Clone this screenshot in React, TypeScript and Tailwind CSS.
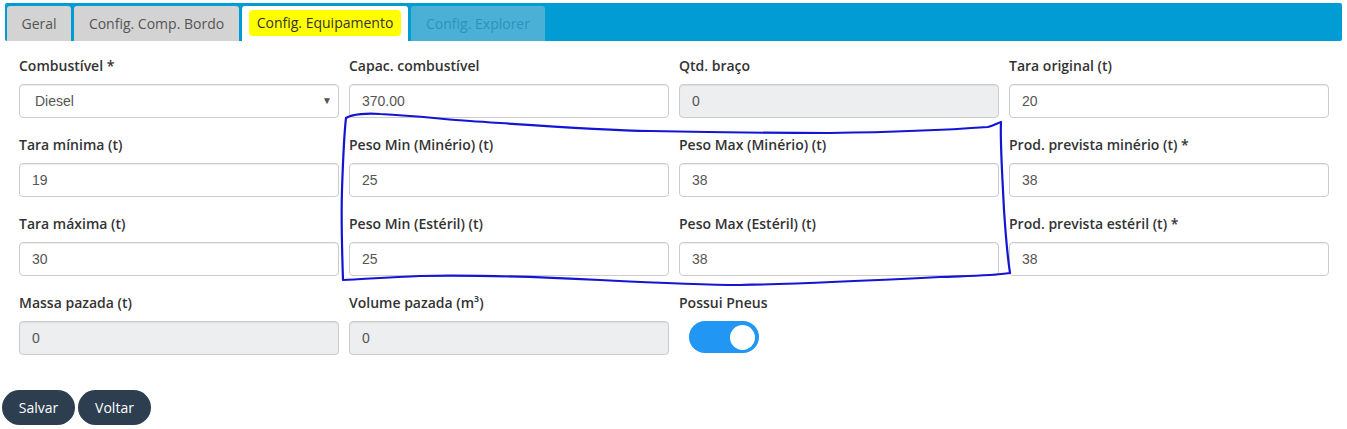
import React from "react";

const sans = { fontFamily: '"Open Sans", "Noto Sans", sans-serif' };
const arial = { fontFamily: '"Liberation Sans", Arial, sans-serif' };

type FieldProps = { label: string; value?: string; disabled?: boolean; select?: boolean };

function Field({ label, value, disabled, select }: FieldProps) {
  return (
    <div className="flex flex-col w-[320px]">
      <div className="h-[20px] leading-[20px] text-[14px] font-semibold text-[#333] mb-[8px] whitespace-nowrap" style={sans}>
        {label}
      </div>
      <div
        className={`relative h-[34px] rounded-[4px] border border-[#cccccc] shadow-[inset_0_1px_1px_rgba(0,0,0,0.075)] flex items-center text-[14px] text-[#555] ${
          disabled ? "bg-[#eceeef]" : "bg-white"
        } ${select ? "pl-[15px]" : "pl-[12px]"}`}
        style={arial}
      >
        {value}
        {select && (
          <span className="absolute right-[6px] top-[10px] text-[10px] leading-[12px] text-[#555]">▼</span>
        )}
      </div>
    </div>
  );
}

export default function App() {
  return (
    <div className="relative w-[1347px] h-[429px] bg-white overflow-hidden" style={sans}>
      <div className="pt-[3px] pl-[5px] pr-[5px]">
        <div className="h-[38px] bg-[#009cd3] rounded-[2px] flex items-end gap-[3px] pl-[2px]">
          <div className="w-[64px] h-[35px] bg-[#d3d3d3] rounded-t-[3px] flex items-center justify-center text-[14px] text-[#555]">
            Geral
          </div>
          <div className="w-[165px] h-[35px] bg-[#d3d3d3] rounded-t-[3px] flex items-center justify-center text-[14px] text-[#555]">
            Config. Comp. Bordo
          </div>
          <div className="w-[166px] h-[35px] bg-white rounded-t-[3px] flex items-center justify-center text-[14px] text-[#333]">
            <span className="bg-[#ffff00] px-[8px] py-[5px] rounded-[4px] leading-[16px] -mt-[2px]">Config. Equipamento</span>
          </div>
          <div className="w-[134px] h-[35px] bg-[#4ab0d6] rounded-t-[3px] flex items-center justify-center text-[14px] text-[#2e93bb]">
            Config. Explorer
          </div>
        </div>
      </div>

      <div className="pl-[19px] pt-[15px] grid grid-cols-[320px_320px_320px_320px] gap-x-[10px] gap-y-[17px]">
        <Field label="Combustível *" value="Diesel" select />
        <Field label="Capac. combustível" value="370.00" />
        <Field label="Qtd. braço" value="0" disabled />
        <Field label="Tara original (t)" value="20" />

        <Field label="Tara mínima (t)" value="19" />
        <Field label="Peso Min (Minério) (t)" value="25" />
        <Field label="Peso Max (Minério) (t)" value="38" />
        <Field label="Prod. prevista minério (t) *" value="38" />

        <Field label="Tara máxima (t)" value="30" />
        <Field label="Peso Min (Estéril) (t)" value="25" />
        <Field label="Peso Max (Estéril) (t)" value="38" />
        <Field label="Prod. prevista estéril (t) *" value="38" />

        <Field label="Massa pazada (t)" value="0" disabled />
        <Field label="Volume pazada (m³)" value="0" disabled />
        <div className="flex flex-col w-[320px]">
          <div className="h-[20px] leading-[20px] text-[14px] font-semibold text-[#333] mb-[8px]">Possui Pneus</div>
          <div className="pl-[10px]">
            <div className="w-[70px] h-[32px] rounded-full bg-[#2196f3] flex items-center justify-end pr-[4px]">
              <div className="w-[25px] h-[25px] rounded-full bg-white" />
            </div>
          </div>
        </div>
      </div>

      <div className="flex gap-[3px] pl-[2px] mt-[35px]">
        <button className="w-[73px] h-[35px] rounded-[18px] bg-[#2c3e50] text-white text-[14px]" style={sans}>
          Salvar
        </button>
        <button className="w-[73px] h-[35px] rounded-[18px] bg-[#2c3e50] text-white text-[14px]" style={sans}>
          Voltar
        </button>
      </div>

      <svg className="absolute left-0 top-0 pointer-events-none" width="1347" height="429" viewBox="0 0 1347 429">
        <path
          d="M346 118 C352 114 368 113 380 114 C420 116 440 119 470 121 C560 127 600 130 650 131 C740 133 790 133 830 133 C900 132 960 129 988 127 C994 125 998 123 1001 122 C1000 140 1002 170 1004 210 C1006 240 1008 260 1010 273 C990 276 960 276 940 277 C860 281 800 284 740 285 C700 285 660 283 600 280 C520 276 470 275 420 276 C390 277 365 279 343 280 C342 250 341 220 342 190 C343 160 344 135 346 118 Z"
          fill="none"
          stroke="#1414d4"
          strokeWidth="2.2"
          strokeLinejoin="round"
        />
      </svg>
    </div>
  );
}
